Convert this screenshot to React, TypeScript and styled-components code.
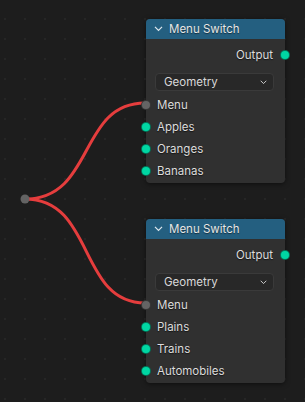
import styled, { createGlobalStyle } from "styled-components";

const GlobalStyle = createGlobalStyle`
  html, body {
    margin: 0;
    padding: 0;
    background: #1d1d1d;
  }
  * { box-sizing: border-box; }
`;

const Canvas = styled.div`
  position: relative;
  width: 305px;
  height: 402px;
  overflow: hidden;
  background-color: #1d1d1d;
  background-image: radial-gradient(circle, #262626 0.8px, transparent 1.2px);
  background-size: 20px 20px;
  background-position: -5px 9px;
  font-family: Inter, "DejaVu Sans", sans-serif;
`;

const Links = styled.svg`
  position: absolute;
  left: 0;
  top: 0;
`;

const Node = styled.div<{ $x: number; $y: number }>`
  position: absolute;
  left: ${(p) => p.$x}px;
  top: ${(p) => p.$y}px;
  width: 139px;
  height: 164px;
  display: flex;
  flex-direction: column;
  background: #303030;
  border-radius: 4px;
  box-shadow: 0 1px 5px rgba(0, 0, 0, 0.55);
`;

const Header = styled.div`
  height: 20px;
  display: flex;
  align-items: center;
  gap: 6px;
  padding-left: 8px;
  background: #245f80;
  border-radius: 4px 4px 0 0;
  color: #e6e6e6;
  font-size: 11.5px;
  text-shadow: 0 1px 1px rgba(0, 0, 0, 0.5);
`;

const Body = styled.div`
  display: flex;
  flex-direction: column;
  padding-top: 5px;
`;

const Row = styled.div<{ $out?: boolean }>`
  position: relative;
  height: 22px;
  display: flex;
  align-items: center;
  justify-content: ${(p) => (p.$out ? "flex-end" : "flex-start")};
  padding: 0 12px 0 11px;
  color: #dcdcdc;
  font-size: 11.5px;
  text-shadow: 0 1px 1px rgba(0, 0, 0, 0.6);
`;

const Socket = styled.span<{ $out?: boolean; $color: string }>`
  position: absolute;
  top: 50%;
  ${(p) => (p.$out ? "right: -5px;" : "left: -5px;")}
  width: 10px;
  height: 10px;
  margin-top: -5px;
  border-radius: 50%;
  background: ${(p) => p.$color};
  border: 1px solid rgba(0, 0, 0, 0.45);
`;

const Dropdown = styled.div`
  margin: 7px 11px 3px 9px;
  height: 18px;
  display: flex;
  align-items: center;
  justify-content: space-between;
  padding: 0 6px 0 8px;
  background: #282828;
  border: 1px solid #3a3a3a;
  border-radius: 4px;
  color: #d8d8d8;
  font-size: 11.5px;
`;

const Chevron = ({ color = "#d0d0d0", size = 8 }: { color?: string; size?: number }) => (
  <svg width={size} height={size / 2 + 1} viewBox="0 0 8 5">
    <polyline points="0.8,0.8 4,4 7.2,0.8" fill="none" stroke={color} strokeWidth="1.1" />
  </svg>
);

type NodeProps = { x: number; y: number; items: string[] };

const MenuSwitch = ({ x, y, items }: NodeProps) => (
  <Node $x={x} $y={y}>
    <Header>
      <Chevron color="#dfe8ee" size={9} />
      <span>Menu Switch</span>
    </Header>
    <Body>
      <Row $out>
        Output
        <Socket $out $color="#00d6a3" />
      </Row>
      <Dropdown>
        <span>Geometry</span>
        <Chevron size={7} />
      </Dropdown>
      <Row>
        <Socket $color="#646464" />
        Menu
      </Row>
      {items.map((it) => (
        <Row key={it}>
          <Socket $color="#00d6a3" />
          {it}
        </Row>
      ))}
    </Body>
  </Node>
);

export default function App() {
  return (
    <Canvas>
      <GlobalStyle />
      <Links width="305" height="402">
        <path d="M 25 199 C 95 199, 78 103, 145 103" fill="none" stroke="#e53d3d" strokeWidth="3" />
        <path d="M 25 199 C 95 199, 78 303, 145 303" fill="none" stroke="#e53d3d" strokeWidth="3" />
        <circle cx="25" cy="199" r="4.5" fill="#636363" />
      </Links>
      <MenuSwitch x={146} y={19} items={["Apples", "Oranges", "Bananas"]} />
      <MenuSwitch x={146} y={219} items={["Plains", "Trains", "Automobiles"]} />
    </Canvas>
  );
}
